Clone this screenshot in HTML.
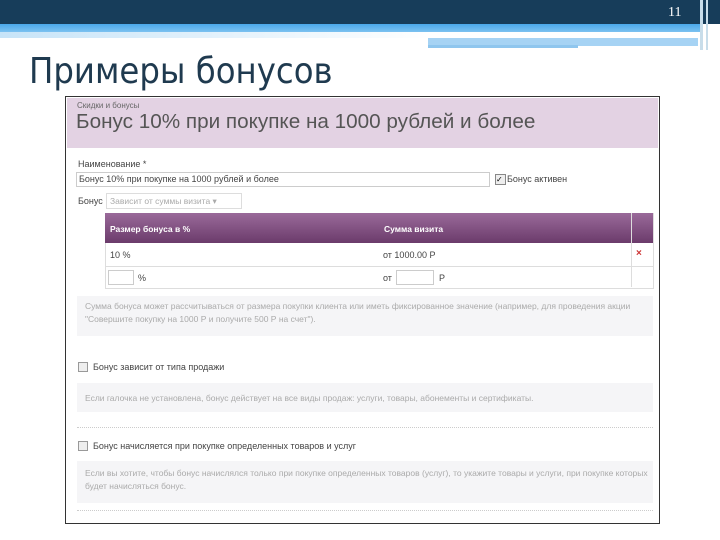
<!DOCTYPE html>
<html><head><meta charset="utf-8"><style>
body{margin:0;width:720px;height:540px;background:#fff;position:relative;overflow:hidden;font-family:"Liberation Sans",sans-serif}
.a{position:absolute}
.s{font-size:9px;color:#444}
.g{color:#aaa;font-size:8.5px;line-height:13px}
</style></head><body>
<div class="a" style="left:0;top:0;width:720px;height:24px;background:#173d5a"></div>
<div class="a" style="left:668px;top:5px;color:#fff;font-size:14px;font-family:'Liberation Serif',serif">11</div>
<div class="a" style="left:0;top:24px;width:700px;height:8px;background:linear-gradient(#4aa8ea,#7cc2f0)"></div>
<div class="a" style="left:0;top:32px;width:430px;height:6px;background:linear-gradient(90deg,#c7e4f8,#fff)"></div>
<div class="a" style="left:428px;top:38px;width:270px;height:8px;background:#a6d3f4"></div>
<div class="a" style="left:428px;top:45px;width:150px;height:3px;background:#8fc6ee"></div>
<div class="a" style="left:700px;top:0;width:3px;height:50px;background:#c8ddea"></div>
<div class="a" style="left:706px;top:0;width:2px;height:50px;background:#c8ddea"></div>
<div class="a" style="left:29px;top:51px;font-size:36px;color:#1f3a4f;font-family:'DejaVu Sans Condensed','Liberation Sans',sans-serif">Примеры бонусов</div>
<div class="a" style="left:65px;top:96px;width:593px;height:426px;border:1.5px solid #333;background:#fff"></div>
<div class="a" style="left:67px;top:98px;width:591px;height:50px;background:#e3d2e3"></div>
<div class="a" style="left:77px;top:101px;font-size:8px;color:#666">Скидки и бонусы</div>
<div class="a" style="left:76px;top:110px;font-size:20.7px;color:#555">Бонус 10% при покупке на 1000 рублей и более</div>
<div class="a s" style="left:78px;top:159px">Наименование *</div>
<div class="a" style="left:76px;top:172px;width:410px;height:13px;border:1px solid #ccc;font-size:9px;color:#444;line-height:13px;padding-left:2px">Бонус 10% при покупке на 1000 рублей и более</div>
<div class="a" style="left:495px;top:174px;width:9px;height:9px;border:1px solid #888;background:#eee;font-size:8px;line-height:9px">✓</div>
<div class="a s" style="left:507px;top:174px">Бонус активен</div>
<div class="a s" style="left:78px;top:196px">Бонус</div>
<div class="a" style="left:106px;top:193px;width:131px;height:14px;border:1px solid #ddd;font-size:8.5px;color:#aaa;line-height:14px;padding-left:3px">Зависит от суммы визита ▾</div>
<div class="a" style="left:105px;top:213px;width:547px;height:74px;border:1px solid #ddd"></div>
<div class="a" style="left:105px;top:213px;width:548px;height:30px;background:linear-gradient(#9a6a9a,#6b3b6b)"></div>
<div class="a" style="left:110px;top:224px;font-size:8.5px;color:#fff;font-weight:bold">Размер бонуса в %</div>
<div class="a" style="left:384px;top:224px;font-size:8.5px;color:#fff;font-weight:bold">Сумма визита</div>
<div class="a" style="left:631px;top:213px;width:1px;height:74px;background:#ddd"></div>
<div class="a" style="left:105px;top:266px;width:548px;height:1px;background:#ddd"></div>
<div class="a s" style="left:110px;top:250px">10 %</div>
<div class="a s" style="left:383px;top:250px">от 1000.00 Р</div>
<div class="a" style="left:636px;top:248px;color:#c33;font-size:10px;font-weight:bold">×</div>
<div class="a" style="left:108px;top:270px;width:24px;height:13px;border:1px solid #ccc"></div>
<div class="a s" style="left:138px;top:273px">%</div>
<div class="a s" style="left:383px;top:273px">от</div>
<div class="a" style="left:396px;top:270px;width:36px;height:13px;border:1px solid #ccc"></div>
<div class="a s" style="left:439px;top:273px">Р</div>
<div class="a g" style="left:77px;top:296px;width:568px;height:36px;background:#f5f5f7;padding:4px 0 0 8px">Сумма бонуса может рассчитываться от размера покупки клиента или иметь фиксированное значение (например, для проведения акции "Совершите покупку на 1000 Р и получите 500 Р на счет").</div>
<div class="a" style="left:78px;top:362px;width:8px;height:8px;border:1px solid #999;background:#eee"></div>
<div class="a s" style="left:93px;top:362px">Бонус зависит от типа продажи</div>
<div class="a g" style="left:77px;top:383px;width:576px;height:29px;background:#f5f5f7;padding:9px 0 0 8px;box-sizing:border-box">Если галочка не установлена, бонус действует на все виды продаж: услуги, товары, абонементы и сертификаты.</div>
<div class="a" style="left:77px;top:427px;width:576px;border-top:1px dotted #ccc"></div>
<div class="a" style="left:78px;top:441px;width:8px;height:8px;border:1px solid #999;background:#eee"></div>
<div class="a s" style="left:93px;top:441px">Бонус начисляется при покупке определенных товаров и услуг</div>
<div class="a g" style="left:77px;top:461px;width:568px;height:36px;background:#f5f5f7;padding:6px 0 0 8px">Если вы хотите, чтобы бонус начислялся только при покупке определенных товаров (услуг), то укажите товары и услуги, при покупке которых будет начисляться бонус.</div>
<div class="a" style="left:77px;top:510px;width:576px;border-top:1px dotted #ccc"></div>
</body></html>
